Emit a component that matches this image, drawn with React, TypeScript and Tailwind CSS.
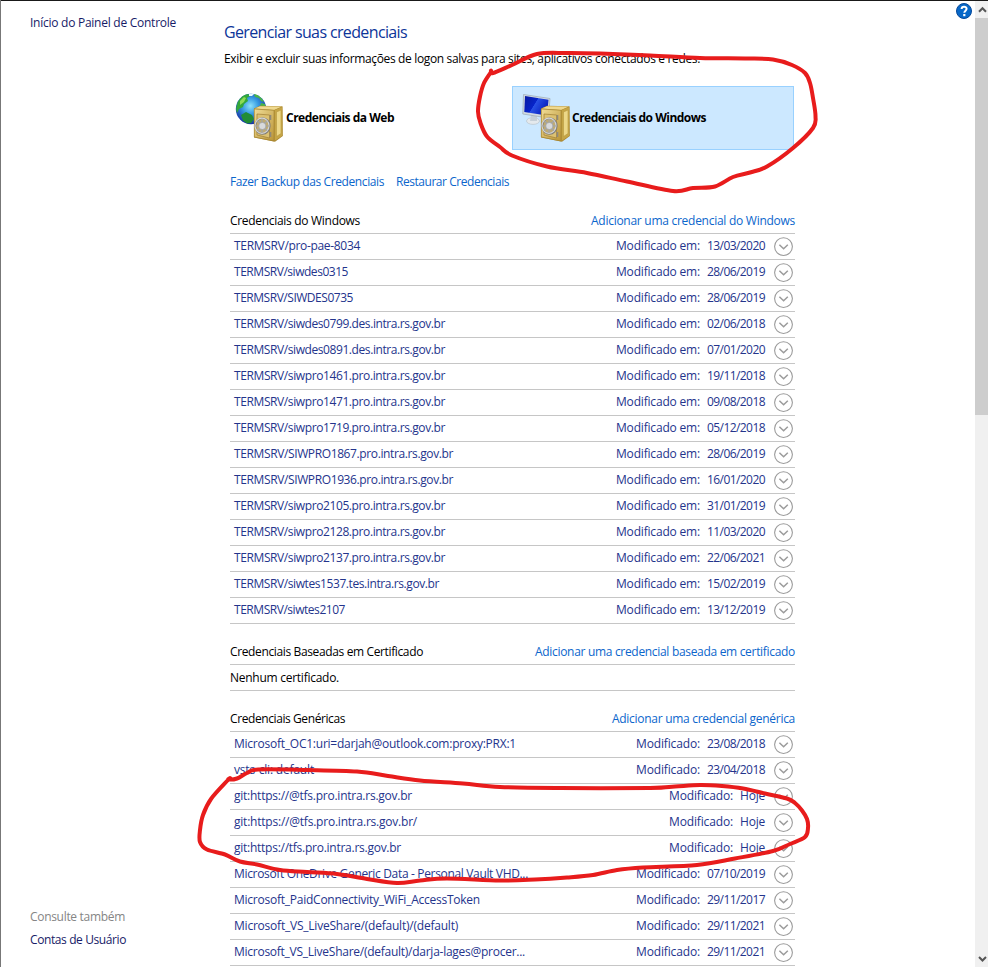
import { useLayoutEffect, useRef, useState } from "react";

type TextProps = { children: string; w: number; className?: string };

/** Single line of text tracked so that it fills exactly `w` pixels. */
function Text({ children, w, className = "" }: TextProps) {
  const ref = useRef<HTMLSpanElement>(null);
  const [spacing, setSpacing] = useState(0);
  useLayoutEffect(() => {
    const el = ref.current;
    if (!el) return;
    el.style.letterSpacing = "0px";
    const natural = el.getBoundingClientRect().width;
    const next = (w - natural) / children.length;
    el.style.letterSpacing = `${next}px`;
    setSpacing(next);
  }, [children, w]);
  return (
    <span ref={ref} className={`inline-block whitespace-pre ${className}`} style={{ letterSpacing: `${spacing}px` }}>
      {children}
    </span>
  );
}

type Credential = { name: string; w: number; date: string };

const windowsCredentials: Credential[] = [
  { name: "TERMSRV/pro-pae-8034", w: 126, date: "13/03/2020" },
  { name: "TERMSRV/siwdes0315", w: 114, date: "28/06/2019" },
  { name: "TERMSRV/SIWDES0735", w: 119, date: "28/06/2019" },
  { name: "TERMSRV/siwdes0799.des.intra.rs.gov.br", w: 211, date: "02/06/2018" },
  { name: "TERMSRV/siwdes0891.des.intra.rs.gov.br", w: 211, date: "07/01/2020" },
  { name: "TERMSRV/siwpro1461.pro.intra.rs.gov.br", w: 211, date: "19/11/2018" },
  { name: "TERMSRV/siwpro1471.pro.intra.rs.gov.br", w: 211, date: "09/08/2018" },
  { name: "TERMSRV/siwpro1719.pro.intra.rs.gov.br", w: 211, date: "05/12/2018" },
  { name: "TERMSRV/SIWPRO1867.pro.intra.rs.gov.br", w: 219, date: "28/06/2019" },
  { name: "TERMSRV/SIWPRO1936.pro.intra.rs.gov.br", w: 219, date: "16/01/2020" },
  { name: "TERMSRV/siwpro2105.pro.intra.rs.gov.br", w: 211, date: "31/01/2019" },
  { name: "TERMSRV/siwpro2128.pro.intra.rs.gov.br", w: 211, date: "11/03/2020" },
  { name: "TERMSRV/siwpro2137.pro.intra.rs.gov.br", w: 211, date: "22/06/2021" },
  { name: "TERMSRV/siwtes1537.tes.intra.rs.gov.br", w: 205, date: "15/02/2019" },
  { name: "TERMSRV/siwtes2107", w: 111, date: "13/12/2019" },
];

const genericCredentials: Credential[] = [
  { name: "Microsoft_OC1:uri=darjah@outlook.com:proxy:PRX:1", w: 282, date: "23/08/2018" },
  { name: "vsts-cli: default", w: 80, date: "23/04/2018" },
  { name: "git:https://@tfs.pro.intra.rs.gov.br", w: 178, date: "Hoje" },
  { name: "git:https://@tfs.pro.intra.rs.gov.br/", w: 183, date: "Hoje" },
  { name: "git:https://tfs.pro.intra.rs.gov.br", w: 167, date: "Hoje" },
  { name: "Microsoft OneDrive Generic Data - Personal Vault VHD...", w: 294, date: "07/10/2019" },
  { name: "Microsoft_PaidConnectivity_WiFi_AccessToken", w: 246, date: "29/11/2017" },
  { name: "Microsoft_VS_LiveShare/(default)/(default)", w: 224, date: "29/11/2021" },
  { name: "Microsoft_VS_LiveShare/(default)/darja-lages@procer...", w: 291, date: "29/11/2021" },
];

function ExpandIcon() {
  return (
    <svg className="ml-[9px] mr-px h-5 w-5 shrink-0" viewBox="0 0 20 20" fill="none">
      <circle cx="9.5" cy="9.6" r="8.9" stroke="#9b9b9b" strokeWidth="1.1" />
      <path d="M5.400 7.800l4.200 4 4.200-4" stroke="#9b9b9b" strokeWidth="1.500" />
    </svg>
  );
}

function CredentialRow({ item, label, labelW }: { item: Credential; label: string; labelW: number }) {
  return (
    <li className="flex h-[26px] items-center border-b border-[#c6c6c6] pl-1 text-[#24348c]">
      <div className="flex flex-1 items-center justify-between pb-0.5">
        <Text w={item.w}>{item.name}</Text>
        <div className="flex gap-[7px]">
          <Text w={labelW}>{label}</Text>
          <Text w={item.date === "Hoje" ? 25 : 58}>{item.date}</Text>
        </div>
      </div>
      <ExpandIcon />
    </li>
  );
}

function SectionHeader({ title, titleW, link, linkW }: { title: string; titleW: number; link: string; linkW: number }) {
  return (
    <div className="flex h-[26px] items-center justify-between border-b border-[#c6c6c6] text-black">
      <Text w={titleW}>{title}</Text>
      <Text w={linkW} className="text-[#0b66cc]">{link}</Text>
    </div>
  );
}

function Safe() {
  return (
    <g>
      <path d="M19 15.500 25 12.800 47.500 13.200 47.800 43 40 48.700 19 44.500Z" fill="#a7842e" />
      <path d="M19.500 15.500 25 13.300 47 13.600 39 17Z" fill="#efd98f" />
      <path d="M39.500 17 47.300 14V42.800L39.500 48Z" fill="#c5a546" />
      <path d="M41.500 19 46 17V40.500L41.500 43.500Z" fill="#ecd787" stroke="#b8983f" strokeWidth=".6" />
      <path d="M19.300 16 39 17.300V48L19.300 44Z" fill="url(#safe-door)" stroke="#a5842f" strokeWidth=".6" />
      <path d="M22 21 34.500 22V45L22 42Z" fill="#dcc171" stroke="#a08035" strokeWidth=".7" />
      <path d="M35.500 22v5M35.500 39v5" stroke="#8f897a" strokeWidth="1.600" />
      <ellipse cx="27.500" cy="33" rx="7.200" ry="7.800" fill="#bfab72" stroke="#807d76" strokeWidth="1.800" />
      <ellipse cx="27" cy="32.700" rx="7" ry="7.600" fill="none" stroke="#d3d5d6" strokeWidth="1.200" />
      <path d="M27 26v14M20.500 33h14M22.500 28l9.500 9.500M32 28l-9.500 9.500" stroke="#a3a6a8" strokeWidth="1.200" />
      <circle cx="27.300" cy="33" r="3.600" fill="#d8dadc" stroke="#9b9ea2" strokeWidth=".7" />
    </g>
  );
}

function IconDefs() {
  return (
    <defs>
      <linearGradient id="safe-door" x1="0" y1="0" x2="1" y2="1">
        <stop stopColor="#f0dc95" />
        <stop offset="1" stopColor="#ba9538" />
      </linearGradient>
      <radialGradient id="ocean" cx=".48" cy=".4" r=".58">
        <stop stopColor="#8fe2fa" />
        <stop offset=".45" stopColor="#379be2" />
        <stop offset="1" stopColor="#1635a6" />
      </radialGradient>
      <linearGradient id="screen" x1="0" y1="0" x2="1" y2=".5">
        <stop stopColor="#0719a0" />
        <stop offset=".5" stopColor="#0724ca" />
        <stop offset=".52" stopColor="#2850e6" />
        <stop offset="1" stopColor="#0720bd" />
      </linearGradient>
    </defs>
  );
}

function WebVaultIcon() {
  return (
    <svg className="h-[50px] w-[50px] shrink-0" viewBox="0 0 50 50">
      <IconDefs />
      <circle cx="16" cy="16" r="15.200" fill="url(#ocean)" />
      <path d="M2 12C3 6 8 2 13 1l2 2-3 2 1 3-4 3-1 3-4 2-2 4c-1-3-1-6 0-8Z" fill="#34a83a" />
      <path d="M5 8l4-4 2 1-2 4-4 3Z" fill="#8edb55" />
      <path d="M19 1c5 1 8 4 10 8l-3-1-2-3-4-1ZM26 10l4 1 1 5-3-1-3-2Z" fill="#49b547" />
      <path d="M6 22l5-3 6 3 2 4-3 4-4 .5-4-3Z" fill="#218c35" />
      <path d="M14 1h5l-2 2h-3Z" fill="#e7faff" />
      <Safe />
    </svg>
  );
}

function WindowsVaultIcon() {
  return (
    <svg className="h-[50px] w-[50px] shrink-0" viewBox="0 0 50 50">
      <ellipse cx="11" cy="28" rx="6.500" ry="3.400" fill="#e4e9ed" stroke="#b9c4cd" strokeWidth=".7" />
      <path d="M9 22h6v6H8Z" fill="#c6d0d8" />
      <path d="M1.500 1.500 28 5.500 26.500 25 .800 21Z" fill="#d3dbe1" stroke="#9aa9b5" strokeWidth=".7" />
      <path d="M3 3 26.500 6.700 25 22.500 2.300 19Z" fill="url(#screen)" />
      <Safe />
    </svg>
  );
}

type Point = [number, number];

const upperLoop: Point[] = [
  [491, 70.5], [493, 73], [512, 65], [537, 54], [567, 53], [600, 53.5], [650, 55.500], [700, 58], [745, 58.500],
  [773, 59.500], [792, 65], [805, 73], [810, 83], [813, 98], [815.5, 116], [813, 128], [793, 148], [767, 166.5],
  [750, 172.5], [733, 177], [715, 186.5], [693, 188], [673, 191], [627, 181.5], [587, 173], [547, 166.5],
  [512, 155.5], [500, 147], [487, 136.5], [480.5, 123], [478, 111.5], [480, 96.5], [484, 83], [491, 72],
];

const lowerLoop: Point[] = [
  [230, 778], [228.5, 779.5], [237, 778.5], [247, 773], [258, 769.500], [307, 770], [357, 771.500], [388, 776],
  [420, 780.5], [463, 783.5], [500, 787], [560, 788], [650, 788], [675, 786.5], [700, 785], [722, 786],
  [743, 788.5], [765, 793.5], [787, 798.5], [795, 803], [802, 810.5], [807, 819], [808, 828], [805, 837],
  [790, 844], [773, 851], [735, 858.5], [697, 865], [643, 867.500], [617, 870], [593, 875], [567, 877.5],
  [535, 879.5], [500, 880.500], [447, 878.5], [420, 880.5], [397, 883], [367, 879], [337, 874], [307, 872],
  [280, 870], [257, 864.500], [240, 861.5], [225, 854.5], [207, 849.5], [200, 842], [200, 830], [203, 815], [211, 799], [228, 780],
];

/** Catmull-Rom spline through the given pen positions. */
function strokePath(points: Point[]) {
  let d = `M${points[0][0]} ${points[0][1]}`;
  for (let i = 0; i < points.length - 1; i++) {
    const a = points[Math.max(0, i - 1)];
    const b = points[i];
    const c = points[i + 1];
    const e = points[Math.min(points.length - 1, i + 2)];
    d += ` C${b[0] + (c[0] - a[0]) / 6} ${b[1] + (c[1] - a[1]) / 6} ${c[0] - (e[0] - b[0]) / 6} ${c[1] - (e[1] - b[1]) / 6} ${c[0]} ${c[1]}`;
  }
  return d;
}

function Annotations() {
  return (
    <svg className="pointer-events-none absolute inset-0 h-[967px] w-[988px]" viewBox="0 0 988 967" fill="none" stroke="#e81c1c" strokeWidth="4" strokeLinecap="round" strokeLinejoin="round">
      <path d={strokePath(upperLoop)} />
      <path d={strokePath(lowerLoop)} />
    </svg>
  );
}

export default function App() {
  return (
    <div className="relative flex h-[967px] w-[988px] overflow-hidden border-l border-[#777777] bg-white font-['Open_Sans','Noto_Sans',sans-serif] text-[12px] leading-4 text-black">
      <aside className="flex w-[223px] shrink-0 flex-col justify-between border-t border-[#191919] pt-3.5 pb-[19px] pl-[29px]">
        <Text w={146} className="self-start text-[#171b67]">Início do Painel de Controle</Text>
        <nav className="flex flex-col items-start gap-[7px]">
          <Text w={95} className="text-[#858585]">Consulte também</Text>
          <Text w={96} className="text-[#171b67]">Contas de Usuário</Text>
        </nav>
      </aside>

      <main className="min-w-0 flex-1 border-t border-[#191919] pt-5">
        <h1 className="flex h-[22px] items-center text-[16px] text-[#0c3599]">
          <Text w={183}>Gerenciar suas credenciais</Text>
        </h1>
        <p className="mt-2 flex h-4">
          <Text w={476}>Exibir e excluir suas informações de logon salvas para sites, aplicativos conectados e redes.</Text>
        </p>

        <div className="mt-[19px] flex h-16 font-bold">
          <div className="flex w-[288px] items-center pl-[11px]">
            <WebVaultIcon />
            <Text w={108} className="ml-px">Credenciais da Web</Text>
          </div>
          <div className="flex w-[282px] items-center border border-[#99d1ff] bg-[#cce8ff] pl-[9px]">
            <WindowsVaultIcon />
            <Text w={134}>Credenciais do Windows</Text>
          </div>
        </div>

        <div className="ml-1.5 w-[565px]">
          <div className="mt-6 flex gap-3 text-[#0b66cc]">
            <Text w={154}>Fazer Backup das Credenciais</Text>
            <Text w={113}>Restaurar Credenciais</Text>
          </div>

          <section className="mt-[18px]">
            <SectionHeader title="Credenciais do Windows" titleW={130} link="Adicionar uma credencial do Windows" linkW={204} />
            <ul>
              {windowsCredentials.map((item) => (
                <CredentialRow key={item.name} item={item} label="Modificado em:" labelW={84} />
              ))}
            </ul>
          </section>

          <section className="mt-[15px]">
            <SectionHeader title="Credenciais Baseadas em Certificado" titleW={193} link="Adicionar uma credencial baseada em certificado" linkW={260} />
            <div className="flex h-[26px] items-center border-b border-[#c6c6c6]">
              <Text w={109}>Nenhum certificado.</Text>
            </div>
          </section>

          <section className="mt-[15px]">
            <SectionHeader title="Credenciais Genéricas" titleW={115} link="Adicionar uma credencial genérica" linkW={183} />
            <ul>
              {genericCredentials.map((item) => (
                <CredentialRow key={item.name} item={item} label="Modificado:" labelW={64} />
              ))}
            </ul>
          </section>
        </div>
      </main>

      <div className="border-t border-[#191919] pt-0.5 pr-[3px]">
        <svg className="h-4 w-4" viewBox="0 0 16 16">
          <circle cx="8" cy="8" r="7.500" fill="#0868c8" stroke="#06499a" />
          <path d="M5.600 6c0-3.200 5-3 5-.2 0 1.800-2.300 1.900-2.300 4" fill="none" stroke="#fff" strokeWidth="2" />
          <rect x="7.200" y="11" width="2.200" height="2.200" fill="#fff" />
        </svg>
      </div>

      <div className="flex w-[13px] shrink-0 flex-col border-t border-[#191919] bg-[#f0f0f0]">
        <svg className="h-[17px] w-[13px]" viewBox="0 0 13 17">
          <path d="M4 10.700l3.500-3.500 3.500 3.500" fill="none" stroke="#555" strokeWidth="2" />
        </svg>
        <div className="h-[397px] bg-[#cdcdcd]" />
        <svg className="mt-auto h-[17px] w-[13px]" viewBox="0 0 13 17">
          <path d="M4 7l3.500 3.500L11 7" fill="none" stroke="#555" strokeWidth="2" />
        </svg>
      </div>
      <div className="absolute inset-y-0 -left-px w-[988px]">
        <Annotations />
      </div>
    </div>
  );
}
